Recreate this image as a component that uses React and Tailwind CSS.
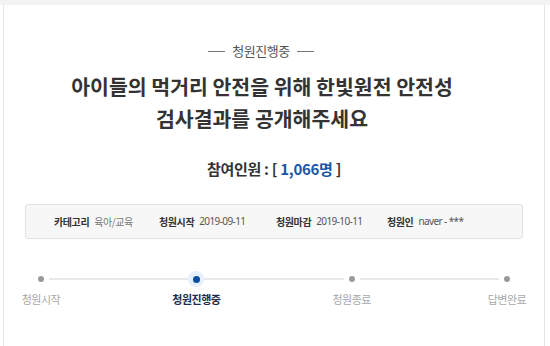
import React from "react";

const font = { fontFamily: '"Noto Sans CJK KR", "Noto Sans", sans-serif' };
const dateFont = { fontFamily: '"Noto Sans", "Noto Sans CJK KR", sans-serif' };

function Step({ label, active, first, last }) {
  return (
    <div className="flex w-[64px] flex-col items-center">
      <div className="flex h-[16px] w-full items-center">
        <div className={"h-[2px] flex-1 " + (first ? "bg-transparent" : "bg-[#e8e8e8]")} />
        <div className="flex h-[16px] w-[16px] items-center justify-center">
          {active ? (
            <div className="flex h-[16px] w-[16px] items-center justify-center rounded-full bg-[#e6f0fb]">
              <div className="h-[7px] w-[7px] rounded-full bg-[#0b4ea2]" />
            </div>
          ) : (
            <div className="h-[6px] w-[6px] rounded-full bg-[#9a9a9a]" />
          )}
        </div>
        <div className={"h-[2px] flex-1 " + (last ? "bg-transparent" : "bg-[#e8e8e8]")} />
      </div>
      <div
        className={
          "mt-[5px] text-[11px] leading-[14px] tracking-[-0.5px] " +
          (active ? "font-bold text-[#1f2d4a]" : "text-[#a8a8a8]")
        }
      >
        {label}
      </div>
    </div>
  );
}

function Seg() {
  return <div className="mt-[7px] h-[2px] flex-1 self-start bg-[#e8e8e8]" />;
}

export default function App() {
  return (
    <div className="h-[346px] w-[550px] overflow-hidden bg-white" style={font}>
      <div className="h-[5px] w-full bg-[#f3f3f3]" />
      <div className="ml-[3px] h-[341px] w-[542px] border-x border-[#e6e6e6] bg-white">
        <div className="flex flex-col items-center">
          <div className="mt-[37px] mr-[26px] flex items-center gap-[7px] text-[13px] leading-[18px] text-[#555]">
            <div className="h-px w-[17px] bg-[#777]" />
            <span className="tracking-[-0.5px]">청원진행중</span>
            <div className="h-px w-[17px] bg-[#777]" />
          </div>
          <h1 className="mt-[10px] mr-[24px] text-center text-[20.5px] font-bold leading-[32px] text-[#333]">
            아이들의 먹거리 안전을 위해 한빛원전 안전성
            <br />
            검사결과를 공개해주세요
          </h1>
          <div className="mt-[25px] text-[15px] font-bold leading-[20px] text-[#333] tracking-[-0.3px]">
            참여인원 : [ <span className="text-[#1b56a8]">1,066명</span> ]
          </div>
        </div>
        <div className="mx-[21px] mt-[25px] flex h-[35px] items-center rounded-[3px] border border-[#e3e3e3] bg-[#f7f7f7] pl-[28px] text-[10px] tracking-[-0.4px]">
          <div className="flex w-[105px] items-center gap-[5px]">
            <span className="font-bold text-[#333]">카테고리</span>
            <span className="text-[#777]">육아/교육</span>
          </div>
          <div className="flex w-[117px] items-center gap-[5px]">
            <span className="font-bold text-[#333]">청원시작</span>
            <span className="tracking-[-0.6px] text-[#555]" style={dateFont}>2019-09-11</span>
          </div>
          <div className="flex w-[111px] items-center gap-[5px]">
            <span className="font-bold text-[#333]">청원마감</span>
            <span className="tracking-[-0.6px] text-[#555]" style={dateFont}>2019-10-11</span>
          </div>
          <div className="flex items-center gap-[5px]">
            <span className="font-bold text-[#333]">청원인</span>
            <span className="tracking-[-0.6px] text-[#555]" style={dateFont}>naver - ***</span>
          </div>
        </div>
        <div className="ml-[5px] mr-[5px] mt-[32px] flex">
          <Step label="청원시작" first />
          <Seg />
          <Step label="청원진행중" active />
          <Seg />
          <Step label="청원종료" />
          <Seg />
          <Step label="답변완료" last />
        </div>
      </div>
    </div>
  );
}
